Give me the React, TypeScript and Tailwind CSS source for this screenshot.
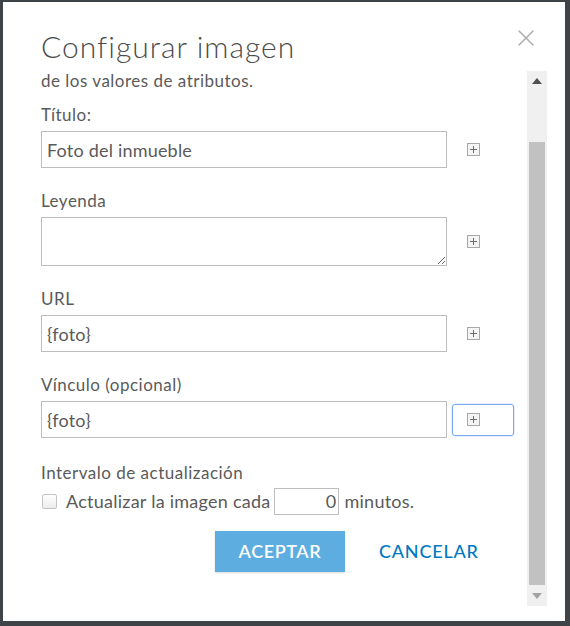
import { X } from 'lucide-react';

const font = { fontFamily: '"Lato", "Noto Sans", sans-serif' };

function PlusIcon() {
  return (
    <svg width="13" height="13" viewBox="0 0 13 13" className="block">
      <rect x="0.5" y="0.5" width="12" height="12" fill="#f4f4f4" stroke="#a8a8a8" />
      <path d="M6.5 3v7M3 6.5h7" stroke="#6b6b6b" strokeWidth="1" />
    </svg>
  );
}

function PlusButton({ focused = false }: { focused?: boolean }) {
  return (
    <div
      className={`flex items-center w-[62px] h-[32px] pl-[14px] rounded-[3px] border ${
        focused ? 'border-[#7aa7f0] shadow-[0_0_2px_#9cc0f7]' : 'border-transparent'
      }`}
    >
      <PlusIcon />
    </div>
  );
}

function Field({
  label,
  value,
  textarea = false,
  focused = false,
}: {
  label: string;
  value: string;
  textarea?: boolean;
  focused?: boolean;
}) {
  return (
    <div className="flex flex-col">
      <div className="text-[17px] leading-5 tracking-[0.5px] text-[#5a5a5a]">{label}</div>
      <div className="flex items-center mt-[6px]">
        {textarea ? (
          <textarea
            defaultValue={value}
            className="w-[406px] h-[49px] border border-[#bdbdbd] bg-white outline-none"
          />
        ) : (
          <input
            defaultValue={value}
            className="w-[406px] h-[37px] border border-[#bdbdbd] bg-white px-[5px] text-[18px] tracking-[0.2px] text-[#5a5a5a] outline-none"
            style={font}
          />
        )}
        <div className="ml-[5px]">
          <PlusButton focused={focused} />
        </div>
      </div>
    </div>
  );
}

function Scrollbar() {
  return (
    <div className="flex flex-col w-[20px] bg-[#f0f0f0] shrink-0">
      <div className="h-[20px] flex items-center justify-center">
        <svg width="10" height="6" viewBox="0 0 10 6">
          <path d="M0 6 L5 0 L10 6 Z" fill="#505050" />
        </svg>
      </div>
      <div className="h-[51px]" />
      <div className="mx-[2px] h-[443px] bg-[#c1c1c1]" />
      <div className="flex-1 flex items-center justify-center">
        <svg width="10" height="6" viewBox="0 0 10 6">
          <path d="M0 0 L10 0 L5 6 Z" fill="#a3a3a3" />
        </svg>
      </div>
    </div>
  );
}

export default function App() {
  return (
    <div className="w-[570px] h-[626px] bg-[#3d4346] pt-[2px] pl-[3px] overflow-hidden" style={font}>
      <div className="w-[562px] h-[619px] bg-white flex flex-col">
        {/* Header */}
        <div className="flex items-start justify-between h-[69px] pl-[38px] pr-[25px]">
          <h1 className="mt-[26px] text-[30px] leading-9 font-light text-[#4c4c4c] tracking-[1px]">
            Configurar imagen
          </h1>
          <X className="mt-[22px] w-[28px] h-[28px] text-[#b0b0b0]" strokeWidth={1.3} />
        </div>

        {/* Body */}
        <div className="flex h-[535px]">
          <div className="flex-1 pl-[38px] overflow-hidden">
            <div className="text-[17px] leading-5 tracking-[0.5px] text-[#5a5a5a]">de los valores de atributos.</div>

            <div className="flex flex-col gap-[23px] mt-[14px]">
              <Field label="Título:" value="Foto del inmueble" />
              <Field label="Leyenda" value="" textarea />
              <Field label="URL" value="{foto}" />
              <Field label="Vínculo (opcional)" value="{foto}" focused />
            </div>

            <div className="mt-[25px] text-[17px] leading-5 tracking-[0.5px] text-[#5a5a5a]">Intervalo de actualización</div>
            <div className="flex items-center mt-[5px] h-[27px] text-[18px] tracking-[0.25px] text-[#5a5a5a]">
              <span className="ml-[1px] w-[15px] h-[15px] rounded-[2px] border border-[#c4c4c4] bg-gradient-to-b from-white to-[#ececec]" />
              <span className="ml-[9px]">Actualizar la imagen cada</span>
              <input
                defaultValue="0"
                className="ml-[4px] w-[65px] h-[27px] border border-[#bdbdbd] text-right pr-[2px] text-[18px] text-[#5a5a5a] outline-none"
                style={font}
              />
              <span className="ml-[5px]">minutos.</span>
            </div>

            <div className="flex items-center mt-[16px] ml-[174px]">
              <button className="w-[130px] h-[41px] bg-[#5dade0] text-white text-[18px] font-semibold tracking-[0.6px] shadow-[0_1px_2px_rgba(0,0,0,0.15)]">
                ACEPTAR
              </button>
              <button className="ml-[34px] text-[#0079c1] text-[18px] font-medium tracking-[0.8px]">
                CANCELAR
              </button>
            </div>
          </div>
          <div className="mr-[18px] flex">
            <Scrollbar />
          </div>
        </div>
      </div>
    </div>
  );
}
